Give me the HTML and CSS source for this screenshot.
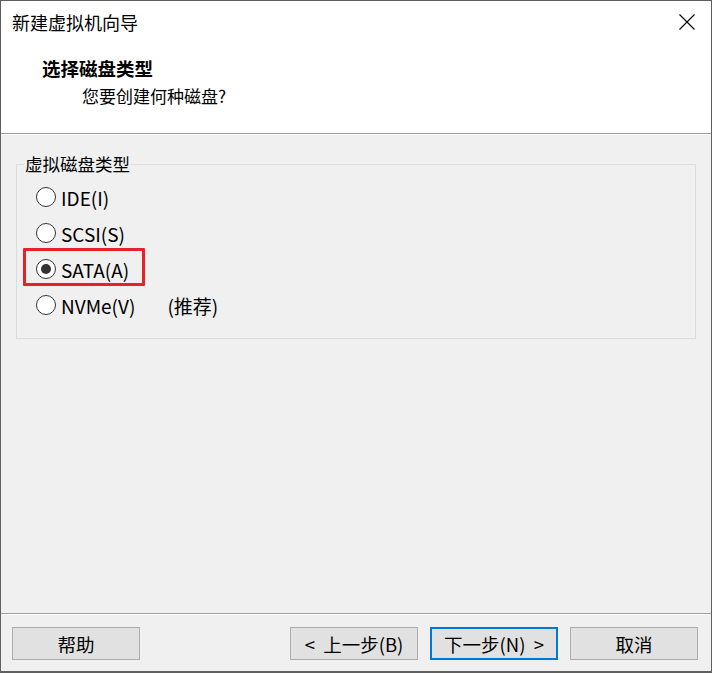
FILE: index.html
```html
<!DOCTYPE html>
<html lang="zh-CN">
<head>
<meta charset="utf-8">
<title>新建虚拟机向导</title>
<link rel="stylesheet" href="styles.css">
</head>
<body>
<div class="window">
  <div class="header">
    <div class="titlebar">
      <span class="title">新建虚拟机向导</span>
      <span class="close">
        <svg width="16" height="16" viewBox="0 0 16 16"><path d="M0.5 0.5 L15.5 15.5 M15.5 0.5 L0.5 15.5" stroke="#000" stroke-width="1.1" fill="none"/></svg>
      </span>
    </div>
    <div class="heading">选择磁盘类型</div>
    <div class="subheading">您要创建何种磁盘?</div>
  </div>
  <div class="content">
    <fieldset class="group">
      <legend class="legend">虚拟磁盘类型</legend>
      <div class="option"><span class="radio"></span><span class="label">IDE(I)</span></div>
      <div class="option"><span class="radio"></span><span class="label">SCSI(S)</span></div>
      <div class="option selected"><span class="radio"><span class="dot"></span></span><span class="label">SATA(A)</span><span class="highlight"></span></div>
      <div class="option"><span class="radio"></span><span class="label">NVMe(V)</span><span class="note">(推荐)</span></div>
    </fieldset>
  </div>
  <div class="footer">
    <button class="btn">帮助</button>
    <div class="spacer"></div>
    <button class="btn">&lt;&nbsp; 上一步(B)</button>
    <button class="btn focused">下一步(N)&nbsp; &gt;</button>
    <button class="btn">取消</button>
  </div>
</div>
</body>
</html>
```

FILE: styles.css
```css
html, body {
  margin: 0;
  padding: 0;
  background: #f0f0f0;
}
body {
  font-family: "Noto Sans CJK SC", "Microsoft YaHei", sans-serif;
  font-size: 17px;
  color: #000;
}
.window {
  width: 712px;
  height: 673px;
  box-sizing: border-box;
  border: 1px solid #5f5f5f;
  border-bottom-width: 2px;
  display: flex;
  flex-direction: column;
  background: #f0f0f0;
}
.header {
  background: #fff;
  height: 132px;
  flex: none;
  border-bottom: 1px solid #a0a0a0;
  box-sizing: content-box;
  display: flex;
  flex-direction: column;
}
.titlebar {
  height: 44px;
  display: flex;
  align-items: center;
  justify-content: space-between;
  padding: 0 16px 0 11px;
}
.title {
  font-size: 18px;
  line-height: 1;
  margin-top: -2px;
}
.close {
  display: flex;
  width: 16px;
  height: 16px;
  margin-top: -2px;
}
.heading {
  font-weight: bold;
  font-size: 18.5px;
  line-height: 24px;
  padding-left: 41px;
  margin-top: 11px;
}
.subheading {
  font-size: 17px;
  line-height: 24px;
  padding-left: 81px;
  margin-top: 4px;
}
.content {
  flex: 1;
  padding: 19px 15px 0 15px;
  border-top: 1px solid #fff;
}
.group {
  margin: 0;
  width: 680px;
  height: 185px;
  box-sizing: border-box;
  border: 1px solid #dcdcdc;
  padding: 5px 0 0 19px;
  position: relative;
}
.legend {
  padding: 0 1px;
  margin-left: -12px;
  font-size: 17.5px;
  line-height: 20px;
  color: #000;
}
.option {
  display: flex;
  align-items: center;
  height: 36px;
  position: relative;
}
.radio {
  width: 18px;
  height: 18px;
  border: 1px solid #333;
  border-radius: 50%;
  background: #fff;
  display: flex;
  align-items: center;
  justify-content: center;
  flex: none;
}
.dot {
  width: 10px;
  height: 10px;
  border-radius: 50%;
  background: #333;
}
.label {
  margin-left: 5px;
  font-size: 19px;
  line-height: 1;
}
.note {
  margin-left: 32px;
  font-size: 19px;
  line-height: 1;
}
.highlight {
  position: absolute;
  left: -13px;
  top: -3px;
  width: 116px;
  height: 32px;
  border: 3px solid #e8202a;
  border-radius: 1px;
}
.footer {
  height: 58px;
  flex: none;
  box-sizing: border-box;
  border-top: 1px solid #a0a0a0;
  box-shadow: inset 0 1px 0 #fff;
  display: flex;
  align-items: flex-start;
  padding: 13px 13px 0 11px;
  gap: 12px;
}
.spacer {
  flex: 1;
}
.btn {
  width: 128px;
  height: 33px;
  box-sizing: border-box;
  border: 1px solid #adadad;
  background: #e1e1e1;
  font-family: inherit;
  font-size: 18.5px;
  color: #000;
  padding: 0;
  margin: 0;
}
.btn.focused {
  border: 2px solid #0078d7;
}
```
